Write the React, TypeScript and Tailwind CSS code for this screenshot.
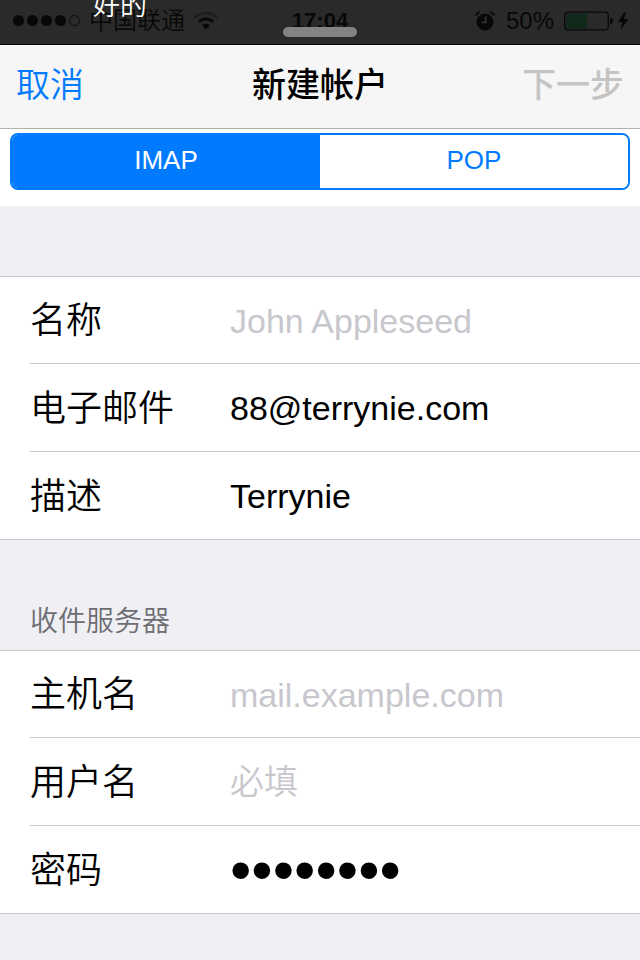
import React, { useState } from "react";

type FieldProps = {
  id: string;
  label: string;
  type?: string;
  placeholder?: string;
  defaultValue?: string;
};

function Field({ id, label, type = "text", placeholder, defaultValue }: FieldProps) {
  const size = type === "password" ? "text-[61px]" : "text-[34px]";
  return (
    <div className="ml-[30px] flex h-[88px] items-center border-b border-[#c8c7cc] pt-[2px] first:h-[87px] last:h-[87px] last:border-b-0">
      <label htmlFor={id} className="w-[200px] shrink-0 text-[36px] leading-[48px] font-[350]">
        {label}
      </label>
      <input
        id={id}
        type={type}
        placeholder={placeholder}
        defaultValue={defaultValue}
        className={`h-[80px] min-w-0 flex-1 bg-transparent p-0 font-[350] outline-none placeholder:text-[#c7c7cd] ${size}`}
      />
    </div>
  );
}

function StatusBar() {
  return (
    <header className="relative h-[45px] overflow-hidden border-b border-black bg-[#2a2a2a] text-[#080808]">
      <div className="grid h-[41px] grid-cols-[1fr_auto_1fr] items-center">
        <div className="flex items-center pl-[13px]">
          <div className="flex gap-[3px]">
            <i className="size-[11px] rounded-full bg-[#080808]" />
            <i className="size-[11px] rounded-full bg-[#080808]" />
            <i className="size-[11px] rounded-full bg-[#080808]" />
            <i className="size-[11px] rounded-full bg-[#080808]" />
            <i className="size-[11px] rounded-full border border-[#080808]" />
          </div>
          <span className="ml-[9px] text-[24px] leading-[28px] font-[350]">中国联通</span>
          <svg className="ml-[8px] h-[20px] w-[26px]" viewBox="0 0 26 20" fill="none" strokeWidth="2.6">
            <path d="M2 6.6C8 0.6 18 0.6 24 6.6" stroke="#1d1d1d" />
            <path d="M5.8 10.8C9.8 6.9 16.2 6.9 20.2 10.8" stroke="#080808" />
            <path d="M13 18.5L9 14.4C11 12.2 15 12.2 17 14.4Z" fill="#080808" />
          </svg>
        </div>
        <time className="text-[22px] leading-[28px] font-bold">17:04</time>
        <div className="flex items-center justify-end pr-[11px]">
          <svg className="h-[20px] w-[20px]" viewBox="0 0 20 20" fill="none">
            <circle cx="10" cy="11" r="8.5" fill="#080808" />
            <path d="M0.8 4.8Q1.6 1.6 5 1.2M19.2 4.8Q18.4 1.6 15 1.2" stroke="#080808" strokeWidth="1.6" />
            <path d="M10.7 5.5V11.3H6.5" stroke="#333333" strokeWidth="1.8" />
          </svg>
          <span className="ml-[11px] text-[24px] leading-[28px]">50%</span>
          <svg className="ml-[10px] h-[20px] w-[50px]" viewBox="0 0 50 20">
            <rect x="0.7" y="1.2" width="43.6" height="17.6" rx="3" fill="none" stroke="#080808" strokeWidth="1.3" />
            <rect x="2" y="2.6" width="21" height="14.8" rx="1" fill="#11281a" />
            <path d="M46 6.5Q49 7 49 10T46 13.5Z" fill="#080808" />
          </svg>
          <svg className="ml-[3px] h-[20px] w-[12px]" viewBox="0 0 12 20" fill="#080808">
            <path d="M7.5 1L1 11H5.2L3.6 19L11.5 8H7L8.8 1Z" />
          </svg>
        </div>
      </div>
      <span className="absolute -top-[14px] left-[93px] text-[27px] leading-[40px] font-[350] text-white">好的</span>
      <i className="absolute top-[27px] left-1/2 h-[10px] w-[74px] -translate-x-1/2 rounded-full bg-[#838383]" />
    </header>
  );
}

export default function App() {
  const [kind, setKind] = useState("IMAP");
  return (
    <div className="min-h-screen bg-[#efeff4] font-['Liberation_Sans','Noto_Sans_CJK_SC',sans-serif] text-black">
      <StatusBar />
      <nav className="grid h-[84px] grid-cols-[1fr_auto_1fr] items-center border-b border-[#b2b2b2] bg-[#f6f6f6] px-[16px] pb-[4px] text-[34px] leading-[48px]">
        <button type="button" className="justify-self-start font-[350] text-[#007aff]">
          取消
        </button>
        <h1 className="font-medium">新建帐户</h1>
        <button type="button" disabled className="justify-self-end font-medium text-[#c4c4c4]">
          下一步
        </button>
      </nav>
      <main>
        <div className="bg-white px-[10px] pt-[4px] pb-[16px]">
          <div className="flex h-[57px] overflow-hidden rounded-[8px] border-2 border-[#007aff] text-[26px]">
            {["IMAP", "POP"].map((name) => (
              <button
                key={name}
                type="button"
                aria-pressed={kind === name}
                onClick={() => setKind(name)}
                className={`flex-1 pb-[2px] ${kind === name ? "bg-[#007aff] text-white" : "bg-white text-[#007aff]"}`}
              >
                {name}
              </button>
            ))}
          </div>
        </div>
        <section className="mt-[70px] border-y border-[#c8c7cc] bg-white">
          <Field id="name" label="名称" placeholder="John Appleseed" />
          <Field id="email" label="电子邮件" type="email" defaultValue="88@terrynie.com" />
          <Field id="description" label="描述" defaultValue="Terrynie" />
        </section>
        <h2 className="px-[30px] pt-[62px] pb-[8px] text-[28px] leading-[40px] font-[350] text-[#6d6d72]">收件服务器</h2>
        <section className="border-y border-[#c8c7cc] bg-white">
          <Field id="host" label="主机名" placeholder="mail.example.com" />
          <Field id="user" label="用户名" placeholder="必填" />
          <Field id="password" label="密码" type="password" defaultValue="12345678" />
        </section>
      </main>
    </div>
  );
}
